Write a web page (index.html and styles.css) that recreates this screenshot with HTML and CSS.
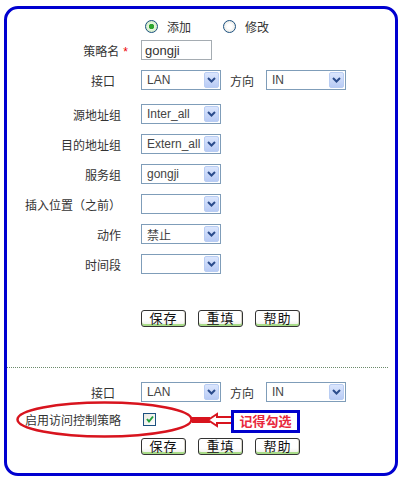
FILE: index.html
```html
<!DOCTYPE html>
<html lang="zh-CN">
<head>
  <meta charset="UTF-8" />
  <title>访问控制策略</title>
  <link rel="stylesheet" href="styles.css">
</head>
<body>
  <div class="frame">
    <div class="radio-row">
      <span class="radio on"></span><span class="rtext">添加</span>
      <span class="radio"></span><span class="rtext">修改</span>
    </div>
    <div class="row">
      <label class="lbl">策略名<span class="req">*</span></label>
      <span class="txt">gongji</span>
    </div>
    <div class="row">
      <label class="lbl short">接口</label>
      <span class="sel"><span class="val">LAN</span><span class="arr"><svg width="9" height="6" viewBox="0 0 9 6"><path d="M1 1 L4.5 4.5 L8 1" fill="none" stroke="#2b4c8c" stroke-width="2"/></svg></span></span>
      <span class="dir">方向</span>
      <span class="sel"><span class="val">IN</span><span class="arr"><svg width="9" height="6" viewBox="0 0 9 6"><path d="M1 1 L4.5 4.5 L8 1" fill="none" stroke="#2b4c8c" stroke-width="2"/></svg></span></span>
    </div>
    <div class="row spaced">
      <label class="lbl">源地址组</label>
      <span class="sel"><span class="val">Inter_all</span><span class="arr"><svg width="9" height="6" viewBox="0 0 9 6"><path d="M1 1 L4.5 4.5 L8 1" fill="none" stroke="#2b4c8c" stroke-width="2"/></svg></span></span>
    </div>
    <div class="row">
      <label class="lbl">目的地址组</label>
      <span class="sel"><span class="val">Extern_all</span><span class="arr"><svg width="9" height="6" viewBox="0 0 9 6"><path d="M1 1 L4.5 4.5 L8 1" fill="none" stroke="#2b4c8c" stroke-width="2"/></svg></span></span>
    </div>
    <div class="row">
      <label class="lbl">服务组</label>
      <span class="sel"><span class="val">gongji</span><span class="arr"><svg width="9" height="6" viewBox="0 0 9 6"><path d="M1 1 L4.5 4.5 L8 1" fill="none" stroke="#2b4c8c" stroke-width="2"/></svg></span></span>
    </div>
    <div class="row">
      <label class="lbl">插入位置（之前）</label>
      <span class="sel"><span class="val"></span><span class="arr"><svg width="9" height="6" viewBox="0 0 9 6"><path d="M1 1 L4.5 4.5 L8 1" fill="none" stroke="#2b4c8c" stroke-width="2"/></svg></span></span>
    </div>
    <div class="row">
      <label class="lbl">动作</label>
      <span class="sel"><span class="val">禁止</span><span class="arr"><svg width="9" height="6" viewBox="0 0 9 6"><path d="M1 1 L4.5 4.5 L8 1" fill="none" stroke="#2b4c8c" stroke-width="2"/></svg></span></span>
    </div>
    <div class="row">
      <label class="lbl">时间段</label>
      <span class="sel"><span class="val"></span><span class="arr"><svg width="9" height="6" viewBox="0 0 9 6"><path d="M1 1 L4.5 4.5 L8 1" fill="none" stroke="#2b4c8c" stroke-width="2"/></svg></span></span>
    </div>
    <div class="btns top">
      <button class="btn">保存</button>
      <button class="btn">重填</button>
      <button class="btn">帮助</button>
    </div>

    <div class="divider"></div>

    <div class="row low">
      <label class="lbl short">接口</label>
      <span class="sel"><span class="val">LAN</span><span class="arr"><svg width="9" height="6" viewBox="0 0 9 6"><path d="M1 1 L4.5 4.5 L8 1" fill="none" stroke="#2b4c8c" stroke-width="2"/></svg></span></span>
      <span class="dir">方向</span>
      <span class="sel"><span class="val">IN</span><span class="arr"><svg width="9" height="6" viewBox="0 0 9 6"><path d="M1 1 L4.5 4.5 L8 1" fill="none" stroke="#2b4c8c" stroke-width="2"/></svg></span></span>
    </div>
    <div class="row check-row">
      <label class="lbl">启用访问控制策略</label>
      <span class="check"><svg width="10" height="10" viewBox="0 0 10 10"><path d="M2 5 L4 7.5 L8 2.5" fill="none" stroke="#22a03a" stroke-width="2"/></svg></span>
    </div>
    <div class="btns bottom">
      <button class="btn">保存</button>
      <button class="btn">重填</button>
      <button class="btn">帮助</button>
    </div>

    <!-- annotation drawn over the form -->
    <svg class="mark" width="230" height="50" viewBox="0 0 230 50">
      <ellipse cx="89.5" cy="29.5" rx="87" ry="17" fill="none" stroke="#d8141e" stroke-width="2.5"/>
      <rect x="177" y="27" width="18" height="6" fill="#d8141e"/>
      <path d="M193 30 L202 24 L202 27 L217 27 L217 33 L202 33 L202 36 Z" fill="#fff" stroke="#d8141e" stroke-width="2"/>
    </svg>
    <div class="note">记得勾选</div>
  </div>
</body>
</html>
```

FILE: styles.css
```css
body {
  margin: 0;
  background: #fff;
  font-family: "Liberation Sans", "Noto Sans CJK SC", sans-serif;
  font-size: 12px;
  color: #333;
}
.frame {
  position: relative;
  width: 394px;
  margin: 6px 0 0 4px;
  padding: 7px 0 18px;
  box-sizing: border-box;
  border: 3px solid #0000d0;
  border-radius: 14px;
}
.radio-row {
  display: flex;
  align-items: center;
  height: 20px;
  padding-left: 138px;
}
.radio {
  width: 11px;
  height: 11px;
  border: 1px solid #1c5180;
  border-radius: 50%;
  background: radial-gradient(circle, #fff 30%, #dcdcd4 100%);
  display: flex;
  align-items: center;
  justify-content: center;
}
.radio.on {
  background: radial-gradient(circle, #2ea52e 0 2.5px, #e8f5e0 3px, #bfe3b0 100%);
}
.rtext {
  margin-left: 9px;
  margin-right: 32px;
}
.row {
  display: flex;
  align-items: center;
  height: 20px;
  margin-top: 10px;
}
.row:nth-child(2) {
  margin-top: 4px;
}
.row.spaced {
  margin-top: 14px;
}
.lbl {
  width: 114px;
  margin-right: 20px;
  text-align: right;
  flex-shrink: 0;
  white-space: nowrap;
}
.lbl.short {
  box-sizing: border-box;
  padding-right: 6px;
}
.req {
  color: #e00;
  margin-left: 4px;
  margin-right: -7px;
}
.txt {
  width: 71px;
  height: 20px;
  box-sizing: border-box;
  border: 1px solid #a5acb2;
  padding: 2px 3px;
  line-height: 15px;
  font-size: 13px;
}
.sel {
  width: 80px;
  height: 20px;
  box-sizing: border-box;
  border: 1px solid #7f9db9;
  display: flex;
  align-items: center;
  padding: 0 1px 0 5px;
  background: #fff;
  font-size: 12px;
  color: #444;
}
.val {
  flex: 1;
  white-space: nowrap;
  overflow: hidden;
}
.arr {
  width: 15px;
  height: 16px;
  border: 1px solid #b9cdf3;
  box-sizing: border-box;
  border-radius: 2px;
  background: linear-gradient(#dbe6fd, #b8cbf5);
  display: flex;
  align-items: center;
  justify-content: center;
}
.dir {
  margin: 0 12px 0 9px;
}
.btns {
  display: flex;
  gap: 12px;
  padding-left: 134px;
}
.btns.top {
  margin-top: 36px;
}
.btns.bottom {
  margin-top: 9px;
}
.btn {
  width: 45px;
  height: 17px;
  padding: 0;
  border: 1px solid #333;
  border-radius: 3px;
  background: linear-gradient(#fff 60%, #ecebe6);
  box-shadow: inset 0 -2px 0 #a8dc88, inset -1px 0 0 #d6d3c8;
  font-family: "Liberation Sans", "Noto Sans CJK SC", sans-serif;
  font-size: 13px;
  line-height: 14px;
  color: #111;
  letter-spacing: 1px;
}
.divider {
  margin: 40px 7px 0 0;
  border-top: 1px dotted #6b8a6b;
}
.row.low {
  margin-top: 14px;
}
.row.check-row {
  margin-top: 7px;
}
.check {
  width: 11px;
  height: 11px;
  border: 1px solid #1c5180;
  background: linear-gradient(135deg, #e8e8e0, #fff);
  display: flex;
  align-items: center;
  justify-content: center;
  margin-left: 2px;
}
.mark {
  position: absolute;
  left: 8px;
  top: 381px;
}
.note {
  position: absolute;
  left: 224px;
  top: 401px;
  width: 69px;
  height: 23px;
  box-sizing: border-box;
  border: 3px solid #0000cc;
  color: #e8283c;
  font-weight: bold;
  font-size: 13px;
  line-height: 17px;
  text-align: center;
  background: #fff;
}
```
